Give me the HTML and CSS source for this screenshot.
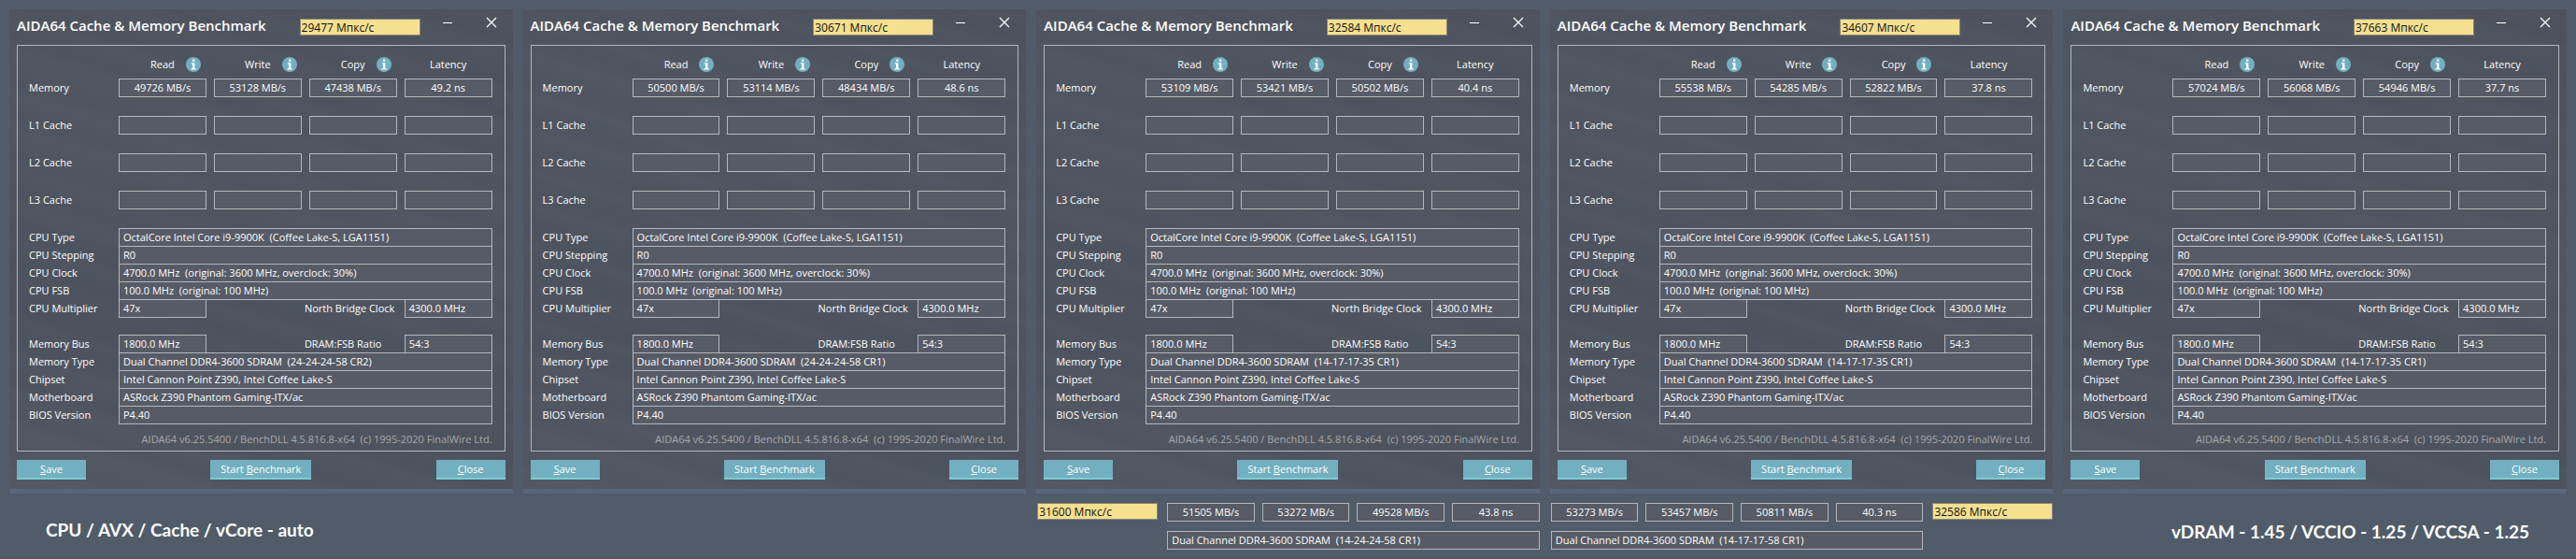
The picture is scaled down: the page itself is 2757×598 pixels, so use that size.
FILE: index.html
```
<!DOCTYPE html>
<html lang="en">
<head>
    <meta charset="UTF-8">
    <meta name="viewport" content="width=device-width, initial-scale=1.0">
    <title>AIDA64 Cache &amp; Memory Benchmark</title>
    <link rel="stylesheet" href="styles.css">
</head>
<body>
    <main class="windows" id="windows"></main>

    <footer class="summary">
        <p class="caption">CPU / AVX / Cache / vCore - auto</p>
        <section class="extra extra-left">
            <span class="score">31600 Мпкс/с</span>
            <div class="extra-values">
                <span class="box">51505 MB/s</span>
                <span class="box">53272 MB/s</span>
                <span class="box">49528 MB/s</span>
                <span class="box">43.8 ns</span>
                <span class="box wide">Dual Channel DDR4-3600 SDRAM&nbsp; (14-24-24-58 CR1)</span>
            </div>
        </section>
        <section class="extra extra-right">
            <div class="extra-values">
                <span class="box">53273 MB/s</span>
                <span class="box">53457 MB/s</span>
                <span class="box">50811 MB/s</span>
                <span class="box">40.3 ns</span>
                <span class="box wide">Dual Channel DDR4-3600 SDRAM&nbsp; (14-17-17-58 CR1)</span>
            </div>
            <span class="score">32586 Мпкс/с</span>
        </section>
        <p class="caption caption-right">vDRAM - 1.45 / VCCIO - 1.25 / VCCSA - 1.25</p>
    </footer>

    <script src="script.js"></script>
</body>
</html>
```
FILE: styles.css
```
* {
    box-sizing: border-box;
}
body {
    min-height: 100vh;
    margin: 0;
    padding: 10px 10px 0;
    border-bottom: 1px solid #4a505c;
    background-color: #505c69;
    color: #fff;
    font-family: "Open Sans", "Noto Sans", sans-serif;
    font-size: 11px;
    line-height: 18px;
}
.windows {
    display: grid;
    grid-template-columns: repeat(5, 1fr);
    gap: 11px;
}

/* window */
.window {
    padding: 0 8px 10px;
    border-bottom: 5px solid #59677c;
    background-color: #4c525d;
    background-image:
        repeating-linear-gradient(17deg, rgba(255, 255, 255, 0) 0, rgba(255, 255, 255, 0.015) 19px, rgba(255, 255, 255, 0) 34px, rgba(255, 255, 255, 0.015) 61px, rgba(255, 255, 255, 0) 77px),
        linear-gradient(17deg, rgba(255, 255, 255, 0.03), rgba(255, 255, 255, 0) 30%, rgba(255, 255, 255, 0.02) 60%, rgba(255, 255, 255, 0));
}
.title-bar {
    display: flex;
    align-items: flex-start;
    height: 38px;
}
.title-bar h1 {
    flex: 1;
    margin: 0;
    padding-top: 6px;
    font-size: 15px;
    line-height: 22px;
    font-weight: 600;
    white-space: nowrap;
}
.score {
    width: 129px;
    height: 18px;
    padding-left: 1px;
    border: 1px solid #8a8678;
    background-color: #f5e090;
    color: #111;
    font-size: 12px;
    line-height: 17px;
    white-space: nowrap;
}
.title-bar .score {
    margin: 10px 18px 0 0;
}
.win-button {
    width: 24px;
    height: 24px;
    margin: 2px 0 0 0;
    padding: 0;
    border: 0;
    background: none;
    color: #fff;
}
.win-button.close {
    margin-left: 22px;
    margin-right: 3px;
}
.win-button svg,
.info svg {
    display: block;
}

/* benchmark results */
.frame {
    padding: 11px 13px 3px 12px;
    border: 1px solid #b4b6bb;
}
.results {
    width: 100%;
    table-layout: fixed;
    border-collapse: collapse;
}
.results th,
.results td {
    padding: 0 0 20px 8px;
    font-weight: normal;
    text-align: center;
}
.results thead th {
    height: 24px;
    padding-bottom: 6px;
}
.results th:first-child {
    width: 88px;
    padding-left: 0;
    text-align: left;
}
.head {
    display: grid;
    grid-template-columns: 1fr auto 1fr;
    align-items: center;
}
.head span {
    grid-column: 2;
}
.info {
    width: 16px;
    height: 16px;
    margin-left: 12px;
    padding: 0;
    border: 0;
    background: none;
}
.box {
    display: block;
    height: 20px;
    border: 1px solid #b4b6bb;
    background-color: #575b66;
    text-align: center;
    white-space: nowrap;
}

/* system details */
.details {
    display: grid;
    grid-template-columns: 88px repeat(4, 1fr);
    column-gap: 8px;
    grid-auto-rows: 19px;
    margin: 0 0 19px;
}
.details dt {
    line-height: 20px;
    white-space: nowrap;
}
.details dd {
    grid-column: 2 / 6;
    height: 20px;
    margin: 0;
    padding-left: 4px;
    border: 1px solid #b4b6bb;
    background-color: #575b66;
    white-space: nowrap;
}
.details dd.short {
    grid-column: 2;
}
.details dt.second {
    grid-column: 3 / 5;
    padding-left: 97px;
}
.details dd.last {
    grid-column: 5;
}
.version {
    margin: -11px 0 0;
    color: #a5a8ad;
    text-align: right;
}
.actions {
    display: flex;
    justify-content: space-between;
    margin-top: 9px;
}
.actions button {
    width: 74px;
    height: 21px;
    padding: 0;
    border: 0;
    border-bottom: 2px solid #7dcbd5;
    background-color: #72afc1;
    color: #fff;
    font: inherit;
}
.actions .start {
    width: 108px;
}

/* bottom strip */
.summary {
    display: grid;
    grid-template-columns: repeat(5, 1fr);
    column-gap: 11px;
    padding-top: 10px;
}
.caption {
    margin: 0;
    padding: 17px 0 0 39px;
    font-family: Lato, sans-serif;
    font-size: 19px;
    line-height: 24px;
    font-weight: bold;
    white-space: nowrap;
}
.extra {
    display: flex;
    align-items: flex-start;
    gap: 10px;
}
.extra-left {
    grid-column: 3;
    padding-left: 1px;
}
.extra-right {
    padding-left: 1px;
}
.extra-values {
    flex: 1;
    display: grid;
    grid-template-columns: repeat(4, 1fr);
    gap: 10px 8px;
}
.extra-values .wide {
    grid-column: 1 / 5;
    padding-left: 4px;
    text-align: left;
}
.caption-right {
    padding: 19px 40px 0 0;
    text-align: right;
}
```
FILE: script.js
```
const windows = [
    { score: '29477', values: ['49726 MB/s', '53128 MB/s', '47438 MB/s', '49.2 ns'], timings: '24-24-24-58 CR2' },
    { score: '30671', values: ['50500 MB/s', '53114 MB/s', '48434 MB/s', '48.6 ns'], timings: '24-24-24-58 CR1' },
    { score: '32584', values: ['53109 MB/s', '53421 MB/s', '50502 MB/s', '40.4 ns'], timings: '14-17-17-35 CR1' },
    { score: '34607', values: ['55538 MB/s', '54285 MB/s', '52822 MB/s', '37.8 ns'], timings: '14-17-17-35 CR1' },
    { score: '37663', values: ['57024 MB/s', '56068 MB/s', '54946 MB/s', '37.7 ns'], timings: '14-17-17-35 CR1' }
];

const infoIcon = `
    <svg width="16" height="16" viewBox="0 0 16 16">
        <circle cx="8" cy="8" r="8" fill="#72afc1"/>
        <path d="M7 2.5h2.4v2.2H7zM5.8 6.2h3.6v5.9h1.2v1.4H5.6v-1.4H7V7.6H5.8z" fill="#fff"/>
    </svg>`;

function headCell(name) {
    const info = name === 'Latency' ? '' : `<button type="button" class="info" aria-label="${name} info">${infoIcon}</button>`;
    return `<th scope="col"><div class="head"><span>${name}</span>${info}</div></th>`;
}

function resultRow(name, values) {
    const cells = values.map(value => `<td><span class="box">${value}</span></td>`).join('');
    return `<tr><th scope="row">${name}</th>${cells}</tr>`;
}

function windowHtml(item) {
    const empty = ['', '', '', ''];
    return `
        <section class="window">
            <header class="title-bar">
                <h1>AIDA64 Cache &amp; Memory Benchmark</h1>
                <span class="score">${item.score} Мпкс/с</span>
                <button type="button" class="win-button" aria-label="Minimize">
                    <svg width="24" height="24" viewBox="0 0 24 24"><path d="M6 12.5h10" stroke="#fff"/></svg>
                </button>
                <button type="button" class="win-button close" aria-label="Close window">
                    <svg width="24" height="24" viewBox="0 0 24 24"><path d="M7 7l10 10M17 7L7 17" stroke="#fff" stroke-width="1.2"/></svg>
                </button>
            </header>
            <div class="frame">
                <table class="results">
                    <thead>
                        <tr><th></th>${['Read', 'Write', 'Copy', 'Latency'].map(headCell).join('')}</tr>
                    </thead>
                    <tbody>
                        ${resultRow('Memory', item.values)}
                        ${resultRow('L1 Cache', empty)}
                        ${resultRow('L2 Cache', empty)}
                        ${resultRow('L3 Cache', empty)}
                    </tbody>
                </table>
                <dl class="details">
                    <dt>CPU Type</dt><dd>OctalCore Intel Core i9-9900K&nbsp; (Coffee Lake-S, LGA1151)</dd>
                    <dt>CPU Stepping</dt><dd>R0</dd>
                    <dt>CPU Clock</dt><dd>4700.0 MHz&nbsp; (original: 3600 MHz, overclock: 30%)</dd>
                    <dt>CPU FSB</dt><dd>100.0 MHz&nbsp; (original: 100 MHz)</dd>
                    <dt>CPU Multiplier</dt><dd class="short">47x</dd>
                    <dt class="second">North Bridge Clock</dt><dd class="last">4300.0 MHz</dd>
                </dl>
                <dl class="details">
                    <dt>Memory Bus</dt><dd class="short">1800.0 MHz</dd>
                    <dt class="second">DRAM:FSB Ratio</dt><dd class="last">54:3</dd>
                    <dt>Memory Type</dt><dd>Dual Channel DDR4-3600 SDRAM&nbsp; (${item.timings})</dd>
                    <dt>Chipset</dt><dd>Intel Cannon Point Z390, Intel Coffee Lake-S</dd>
                    <dt>Motherboard</dt><dd>ASRock Z390 Phantom Gaming-ITX/ac</dd>
                    <dt>BIOS Version</dt><dd>P4.40</dd>
                </dl>
                <p class="version">AIDA64 v6.25.5400 / BenchDLL 4.5.816.8-x64&nbsp; (c) 1995-2020 FinalWire Ltd.</p>
            </div>
            <div class="actions">
                <button type="button"><u>S</u>ave</button>
                <button type="button" class="start">Start <u>B</u>enchmark</button>
                <button type="button"><u>C</u>lose</button>
            </div>
        </section>`;
}

document.getElementById('windows').innerHTML = windows.map(windowHtml).join('');
```
